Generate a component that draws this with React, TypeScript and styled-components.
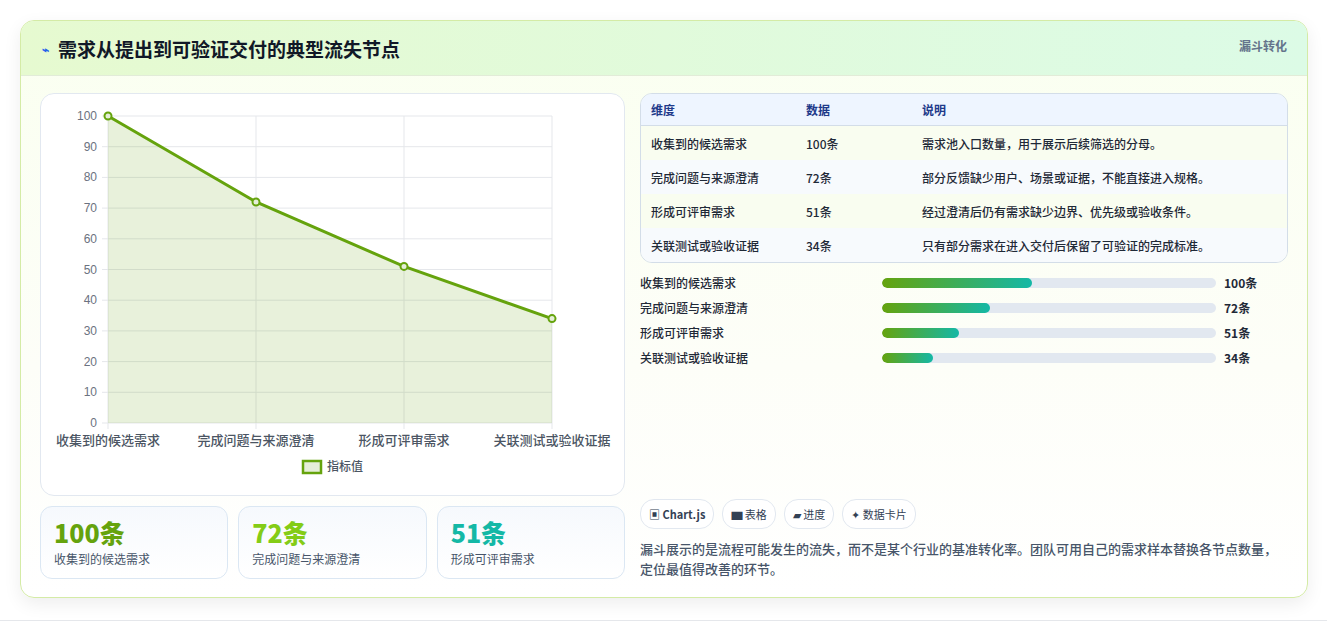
import React from 'react'
import styled, { createGlobalStyle } from 'styled-components'

const GlobalStyle = createGlobalStyle`
  body {
    margin: 0;
    background: #ffffff;
    font-family: "Noto Sans CJK SC", "Noto Sans", sans-serif;
  }
`

const stages = [
  { name: '收集到的候选需求', value: 100, note: '需求池入口数量，用于展示后续筛选的分母。' },
  { name: '完成问题与来源澄清', value: 72, note: '部分反馈缺少用户、场景或证据，不能直接进入规格。' },
  { name: '形成可评审需求', value: 51, note: '经过澄清后仍有需求缺少边界、优先级或验收条件。' },
  { name: '关联测试或验收证据', value: 34, note: '只有部分需求在进入交付后保留了可验证的完成标准。' }
]

const statColors = ['#65a30d', '#84cc16', '#14b8a6']

const Chart = () => {
  const x0 = 67
  const x1 = 511
  const y0 = 22
  const y1 = 329
  const px = (i: number) => x0 + ((x1 - x0) / 3) * i
  const py = (v: number) => y1 - ((y1 - y0) * v) / 100
  const pts = stages.map((s, i) => `${px(i)},${py(s.value)}`).join(' ')
  return (
    <svg width="585" height="401" viewBox="0 0 585 401">
      {Array.from({ length: 11 }).map((_, k) => (
        <g key={k}>
          <line x1={x0 - 6} x2={x1} y1={py(k * 10)} y2={py(k * 10)} stroke="#e5e7eb" />
          <text x={x0 - 11} y={py(k * 10) + 4} fontSize="12" fill="#6b7280" textAnchor="end" fontFamily="Liberation Sans, sans-serif">
            {k * 10}
          </text>
        </g>
      ))}
      {stages.map((s, i) => (
        <g key={s.name}>
          <line x1={px(i)} x2={px(i)} y1={y0} y2={y1 + 6} stroke="#e5e7eb" />
          <text x={px(i)} y={y1 + 22} fontSize="13" fontWeight="500" fill="#4b5563" textAnchor="middle">
            {s.name}
          </text>
        </g>
      ))}
      <polygon points={`${x0},${y1} ${pts} ${x1},${y1}`} fill="rgba(101,163,13,0.15)" />
      <polyline points={pts} fill="none" stroke="#65a30d" strokeWidth="3" />
      {stages.map((s, i) => (
        <circle key={i} cx={px(i)} cy={py(s.value)} r="3.5" fill="#e5eed8" stroke="#65a30d" strokeWidth="2" />
      ))}
      <rect x="262" y="367" width="18" height="12" fill="#e5eed8" stroke="#65a30d" strokeWidth="2.5" />
      <text x="286" y="377" fontSize="12" fontWeight="500" fill="#4b5563">指标值</text>
    </svg>
  )
}

export default function App() {
  return (
    <>
      <GlobalStyle />
      <Page>
        <Card>
          <Header>
            <Title>
              <Bolt>⌁</Bolt>需求从提出到可验证交付的典型流失节点
            </Title>
            <Tag>漏斗转化</Tag>
          </Header>
          <Body>
            <LeftCol>
              <ChartBox>
                <Chart />
              </ChartBox>
              <Stats>
                {stages.slice(0, 3).map((s, i) => (
                  <Stat key={s.name}>
                    <StatValue $color={statColors[i]}>{s.value}条</StatValue>
                    <StatLabel>{s.name}</StatLabel>
                  </Stat>
                ))}
              </Stats>
            </LeftCol>
            <RightCol>
              <Table>
                <colgroup>
                  <col style={{ width: 155 }} />
                  <col style={{ width: 116 }} />
                  <col />
                </colgroup>
                <thead>
                  <tr>
                    <Th>维度</Th>
                    <Th>数据</Th>
                    <Th>说明</Th>
                  </tr>
                </thead>
                <tbody>
                  {stages.map((s, i) => (
                    <Tr key={s.name} $odd={i % 2 === 1}>
                      <Td>{s.name}</Td>
                      <Td>{s.value}条</Td>
                      <Td>{s.note}</Td>
                    </Tr>
                  ))}
                </tbody>
              </Table>
              <Bars>
                {stages.map((s) => (
                  <BarRow key={s.name}>
                    <BarLabel>{s.name}</BarLabel>
                    <Track>
                      <Fill style={{ width: `${s.value * 0.45}%` }} />
                    </Track>
                    <BarValue>{s.value}条</BarValue>
                  </BarRow>
                ))}
              </Bars>
              <Footer>
                <Chips>
                  <Chip><b>▣ Chart.js</b></Chip>
                  <Chip>▆ 表格</Chip>
                  <Chip>▰ 进度</Chip>
                  <Chip>✦ 数据卡片</Chip>
                </Chips>
                <Note>
                  漏斗展示的是流程可能发生的流失，而不是某个行业的基准转化率。团队可用自己的需求样本替换各节点数量，定位最值得改善的环节。
                </Note>
              </Footer>
            </RightCol>
          </Body>
        </Card>
      </Page>
    </>
  )
}

const Page = styled.div`
  padding: 20px 20px 22px 20px;
  border-bottom: 1px solid #e5e7eb;
`

const Card = styled.div`
  width: 1286px;
  border: 1px solid #d4eba6;
  border-radius: 14px;
  overflow: hidden;
  background: linear-gradient(180deg, #fafff0 0%, #fdfef8 60%, #ffffff 100%);
  box-shadow: 0 6px 18px rgba(0, 0, 0, 0.07);
`

const Header = styled.div`
  height: 54px;
  display: flex;
  align-items: center;
  justify-content: space-between;
  padding: 0 20px 0 21px;
  background: linear-gradient(90deg, #e6fad0 0%, #dcfbe6 100%);
  border-bottom: 1px solid #e2ecd8;
`

const Title = styled.h1`
  margin: 0;
  display: flex;
  align-items: center;
  gap: 9px;
  font-size: 19px;
  font-weight: 700;
  color: #111827;
`

const Bolt = styled.span`
  font-size: 12px;
  color: #2563eb;
`

const Tag = styled.span`
  align-self: flex-start;
  margin-top: 16px;
  font-size: 12px;
  font-weight: 700;
  color: #64748b;
`

const Body = styled.div`
  display: flex;
  gap: 15px;
  padding: 17px 19px 18px 19px;
`

const LeftCol = styled.div`
  width: 585px;
  display: flex;
  flex-direction: column;
  gap: 10px;
`

const ChartBox = styled.div`
  height: 401px;
  background: #fff;
  border: 1px solid #e2e8f0;
  border-radius: 14px;
  overflow: hidden;
`

const Stats = styled.div`
  display: grid;
  grid-template-columns: 1fr 1fr 1fr;
  gap: 10px;
`

const Stat = styled.div`
  height: 73px;
  box-sizing: border-box;
  padding: 10px 13px;
  border: 1px solid #dbe7f3;
  border-radius: 12px;
  background: linear-gradient(180deg, #f6f9fd, #ffffff);
`

const StatValue = styled.div<{ $color: string }>`
  font-size: 25px;
  line-height: 31px;
  font-weight: 800;
  color: ${(p) => p.$color};
`

const StatLabel = styled.div`
  font-size: 12px;
  color: #475569;
  margin-top: 2px;
`

const RightCol = styled.div`
  flex: 1;
  display: flex;
  flex-direction: column;
`

const Table = styled.table`
  width: 100%;
  table-layout: fixed;
  border-collapse: separate;
  border-spacing: 0;
  border: 1px solid #d3dde8;
  border-radius: 12px;
  overflow: hidden;
  font-size: 12px;
`

const Th = styled.th`
  text-align: left;
  height: 31px;
  padding: 0 10px;
  font-weight: 700;
  color: #1e3a8a;
  background: #eef5ff;
  border-bottom: 1px solid #d3dde8;
`

const Tr = styled.tr<{ $odd: boolean }>`
  background: ${(p) => (p.$odd ? '#f7fafd' : '#f9fdf0')};
  & + & td {
    border-top: 1px solid #e2e8f0;
  }
`

const Td = styled.td`
  height: 34px;
  padding: 0 10px;
  color: #1f2937;
  font-weight: 500;
`

const Bars = styled.div`
  display: flex;
  flex-direction: column;
  gap: 6px;
  margin-top: 10px;
`

const BarRow = styled.div`
  display: grid;
  grid-template-columns: 242px 334px 1fr;
  align-items: center;
  height: 19px;
  font-size: 12px;
`

const BarLabel = styled.span`
  color: #1f2937;
  font-weight: 500;
`

const Track = styled.div`
  height: 10px;
  border-radius: 5px;
  background: #e2e8f0;
  overflow: hidden;
`

const Fill = styled.div`
  height: 100%;
  border-radius: 5px;
  background: linear-gradient(90deg, #65a30d, #14b8a6);
`

const BarValue = styled.span`
  padding-left: 8px;
  font-weight: 700;
  color: #1f2937;
`

const Footer = styled.div`
  margin-top: auto;
`

const Chips = styled.div`
  display: flex;
  gap: 8px;
`

const Chip = styled.span`
  height: 28px;
  display: inline-flex;
  align-items: center;
  padding: 0 8px;
  border: 1px solid #e2e8f0;
  border-radius: 14px;
  background: #fff;
  font-size: 11px;
  color: #334155;
  b {
    font-weight: 700;
  }
`

const Note = styled.p`
  margin: 10px 0 0 0;
  font-size: 13px;
  line-height: 20px;
  color: #475569;
  font-weight: 500;
`
